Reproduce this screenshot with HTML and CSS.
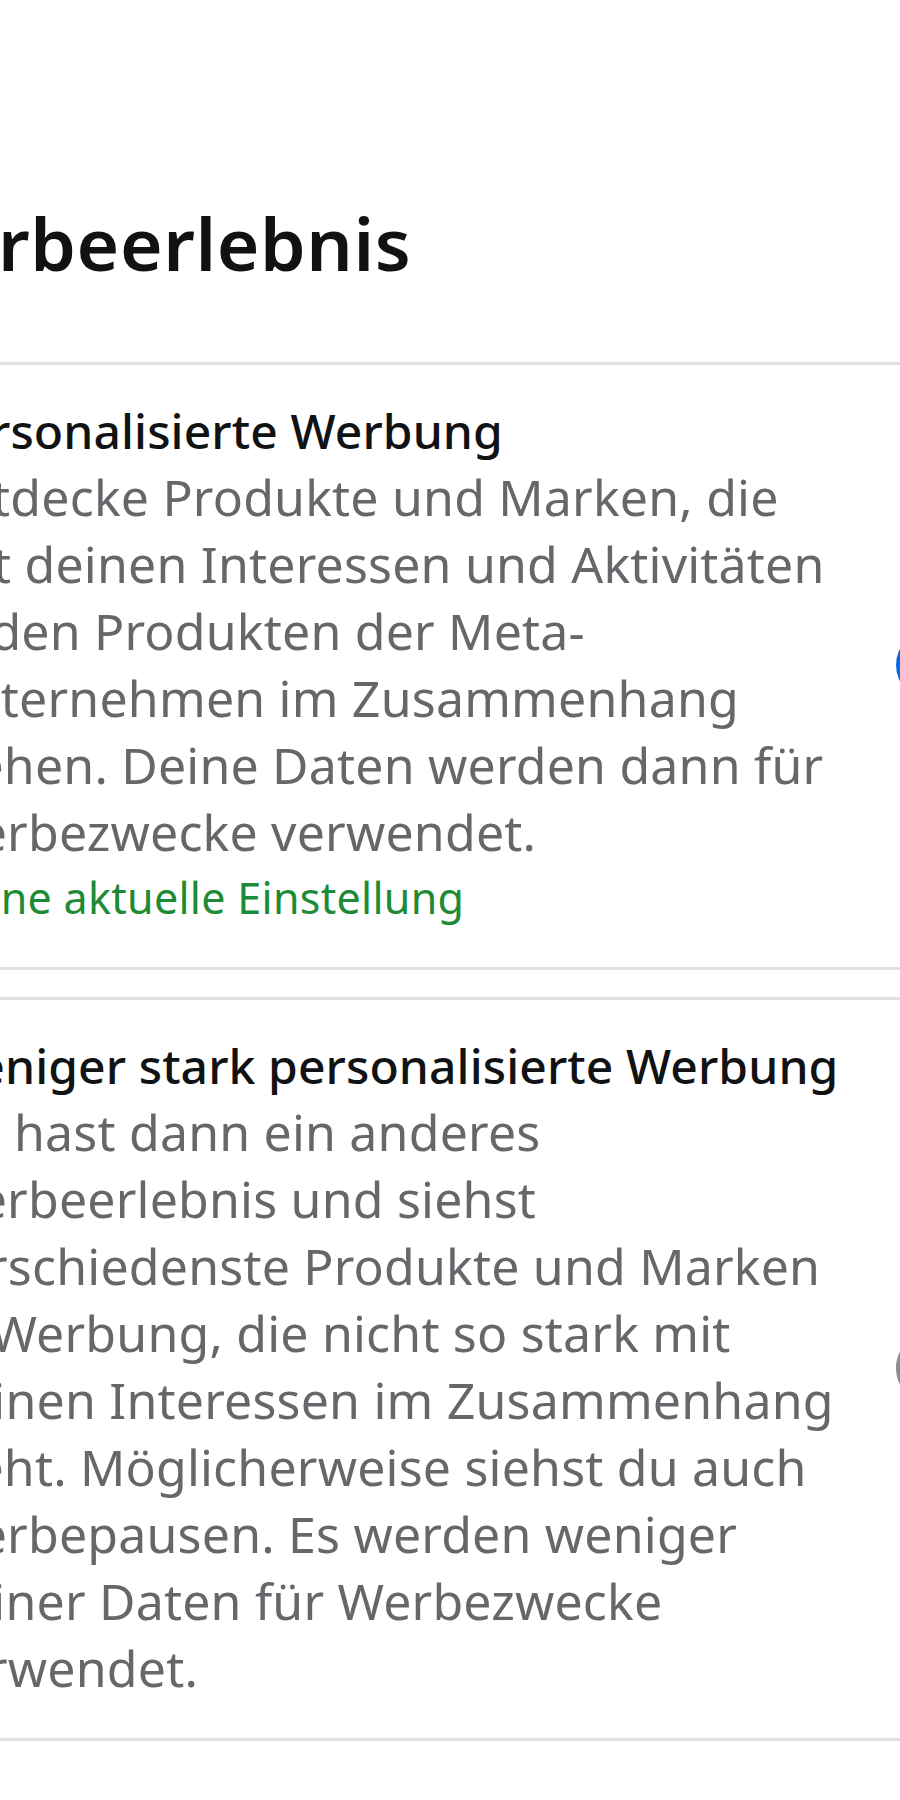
FILE: index.html
```html
<!DOCTYPE html>
<html lang="de">
<head>
<meta charset="utf-8">
<title>Werbeerlebnis</title>
<link rel="stylesheet" href="styles.css">
</head>
<body>
<div class="page">
  <h1 class="heading">Werbeerlebnis</h1>
  <div class="options">
    <div class="option">
      <div class="option-text">
        <div class="option-title">Personalisierte Werbung</div>
        <div class="option-desc">Entdecke Produkte und Marken, die<br>mit deinen Interessen und Aktivitäten<br>in den Produkten der Meta-<br>Unternehmen im Zusammenhang<br>stehen. Deine Daten werden dann für<br>Werbezwecke verwendet.</div>
        <div class="option-status">Deine aktuelle Einstellung</div>
      </div>
      <span class="radio radio-on"></span>
    </div>
    <div class="option">
      <div class="option-text">
        <div class="option-title">Weniger stark personalisierte Werbung</div>
        <div class="option-desc">Du hast dann ein anderes<br>Werbeerlebnis und siehst<br>verschiedenste Produkte und Marken<br>in Werbung, die nicht so stark mit<br>deinen Interessen im Zusammenhang<br>steht. Möglicherweise siehst du auch<br>Werbepausen. Es werden weniger<br>deiner Daten für Werbezwecke<br>verwendet.</div>
      </div>
      <span class="radio radio-off"></span>
    </div>
  </div>
</div>
</body>
</html>
```
FILE: styles.css
```css
html, body {
  margin: 0;
  padding: 0;
  background: #ffffff;
}
body {
  width: 900px;
  height: 1800px;
  overflow: hidden;
  font-family: "Noto Sans", "Open Sans", sans-serif;
}
.page {
  margin-left: -67px;
  width: 1100px;
}
.heading {
  margin: 0 0 0 -47px;
  padding-top: 197px;
  padding-bottom: 74px;
  font-size: 73px;
  line-height: 91px;
  font-weight: 600;
  letter-spacing: 0.6px;
  color: #111214;
  white-space: nowrap;
}
.options {
  display: flex;
  flex-direction: column;
  gap: 27px;
}
.option {
  display: flex;
  align-items: center;
  border-top: 3px solid #dfe1e5;
  border-bottom: 3px solid #dfe1e5;
  padding: 33px 0 36px;
}
.option-text {
  width: 963px;
  flex: none;
  white-space: nowrap;
}
.option-title {
  font-size: 48px;
  line-height: 66px;
  font-weight: 500;
  letter-spacing: 0.1px;
  color: #111214;
}
.option-desc {
  font-size: 50px;
  line-height: 66.9px;
  letter-spacing: 0.2px;
  color: #65676b;
}
.option-status {
  font-size: 43px;
  line-height: 66px;
  letter-spacing: 0.3px;
  color: #1d8a36;
}
.radio {
  flex: none;
  width: 70px;
  height: 70px;
  border-radius: 50%;
  box-sizing: border-box;
}
.radio-on {
  background: #0a66e8;
}
.radio-off {
  border: 6px solid #8a8d91;
  background: #ffffff;
}
```
